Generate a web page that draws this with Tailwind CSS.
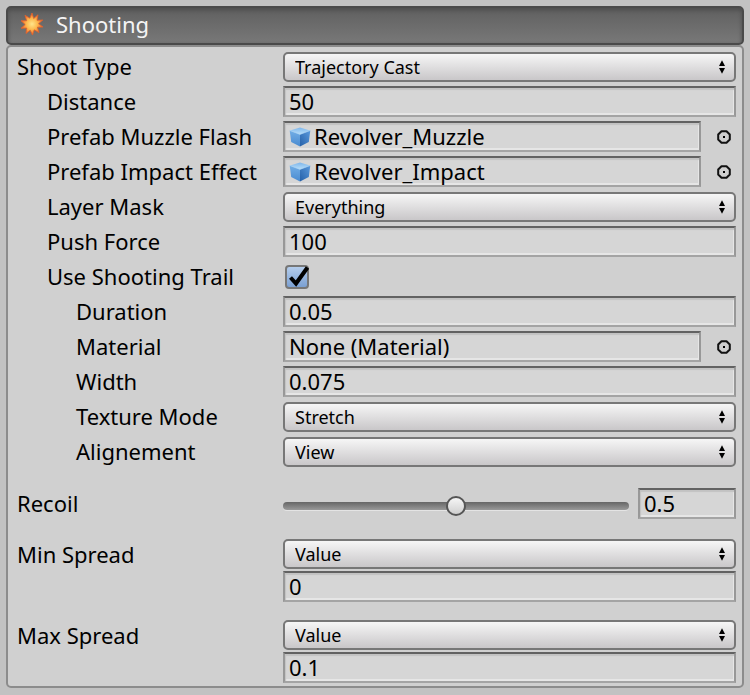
<!DOCTYPE html>
<html lang="en">
<head>
<meta charset="utf-8">
<meta name="viewport" content="width=device-width, initial-scale=1">
<title>Shooting</title>
<script src="https://cdn.jsdelivr.net/npm/@tailwindcss/browser@4"></script>
</head>
<body class="min-h-screen bg-[#c2c2c2] px-[6px] py-[6px] font-['Noto_Sans','Open_Sans',sans-serif] text-[22px] text-black">

<svg class="absolute size-0" aria-hidden="true">
  <defs>
    <linearGradient id="cubeTop" x1="0" y1="0" x2="0" y2="1"><stop offset="0" stop-color="#7fb6ea"/><stop offset="1" stop-color="#b9e0fb"/></linearGradient>
    <linearGradient id="cubeLeft" x1="0" y1="0" x2="0" y2="1"><stop offset="0" stop-color="#72aee6"/><stop offset="1" stop-color="#4a8bd0"/></linearGradient>
    <linearGradient id="cubeRight" x1="1" y1="0" x2="0" y2="1"><stop offset="0" stop-color="#5b9add"/><stop offset="1" stop-color="#2560a8"/></linearGradient>
    <radialGradient id="burst"><stop offset="0" stop-color="#ffe48a"/><stop offset=".5" stop-color="#fdb94e"/><stop offset="1" stop-color="#f0662a"/></radialGradient>
    <symbol id="cube" viewBox="0 0 22 20">
      <path d="M11 .5 21 3.5 11 7.5 1 3.5Z" fill="url(#cubeTop)"/>
      <path d="M.7 3.6 11 7.4V19.6L2.200 15.100Z" fill="url(#cubeLeft)"/>
      <path d="M21.300 3.600 11 7.400V19.600L19.800 15.100Z" fill="url(#cubeRight)"/>
      <path d="M1 3.600 11 7.400 21 3.600" fill="none" stroke="#a9d5f8" stroke-width=".6"/>
    </symbol>
    <symbol id="updown" viewBox="0 0 8 14"><path d="M4 .3 7 6H1ZM1 8H7L4 13.700Z"/></symbol>
    <symbol id="target" viewBox="0 0 16 16">
      <path d="M5.500 2.200H10.500L13.800 5.500V10.500L10.500 13.800H5.500L2.200 10.500V5.500Z" fill="none" stroke="#111" stroke-width="2" stroke-linejoin="round"/>
      <rect x="7" y="7" width="2" height="2" fill="#000"/>
    </symbol>
  </defs>
</svg>

<main>
  <header class="flex h-[39px] items-center gap-3 rounded-[5px] border-2 border-[#4a4a4a] bg-linear-to-b from-[#606060] to-[#787878] pb-[3px] pl-[12px] shadow-[inset_0_2px_4px_#4c4c4c]">
    <svg class="size-[24px]" viewBox="0 0 24 24" aria-hidden="true">
      <path d="M12 1 13.700 6.500 18 2.800 17 8.300 22.800 8 18.500 11.700 23 15 17.400 15.200 19 20.600 14.200 17.800 12.500 23 10.200 18.200 6 21.500 6.700 16 1 16.300 5.200 12.500 1 8.800 6.700 8.700 5 3.300 9.800 6.200Z" fill="url(#burst)" stroke="#e2622c" stroke-width=".8" stroke-linejoin="round"/>
    </svg>
    <h1 class="text-[22px] leading-[30px] text-[#f4f4f4]">Shooting</h1>
  </header>

  <form class="rounded-[5px] border-2 border-[#8c8c8c] bg-[#d0d0d0] pt-[2px] pr-[6px] pb-[3px] pl-[9px]">
    <div class="grid grid-cols-[266px_minmax(0,1fr)] auto-rows-[35px] items-center">
      <label for="type">Shoot Type</label>
      <div class="grid items-center">
        <select id="type" class="col-start-1 row-start-1 h-[30px] w-full appearance-none rounded-[5px] border-2 border-[#777] bg-linear-to-b from-[#f6f6f6] to-[#c9c7c9] pl-[10px] text-[18px] leading-[24px]"><option>Trajectory Cast</option></select>
        <svg class="pointer-events-none col-start-1 row-start-1 mr-[10px] h-[14px] w-[8px] justify-self-end"><use href="#updown"/></svg>
      </div>

      <label for="distance" class="pl-[30px]">Distance</label>
      <input id="distance" value="50" class="h-[31px] w-full border-2 border-t-[#626262] border-x-[#989898] border-b-[#a4a4a4] bg-[#d6d6d6] px-1 shadow-[inset_1px_2px_1px_#c2c2c2,inset_-1px_-2px_0_#e6e6e6]">

      <label for="muzzle" class="pl-[30px]">Prefab Muzzle Flash</label>
      <div class="flex items-center">
        <div class="flex h-[31px] flex-1 items-center gap-[3px] border-2 border-t-[#626262] border-x-[#989898] border-b-[#a4a4a4] bg-[#d6d6d6] px-1 shadow-[inset_1px_2px_1px_#c2c2c2,inset_-1px_-2px_0_#e6e6e6]">
          <svg class="h-[20px] w-[22px]" aria-hidden="true"><use href="#cube"/></svg>
          <input id="muzzle" readonly value="Revolver_Muzzle" class="min-w-0 flex-1 bg-transparent">
        </div>
        <button type="button" aria-label="Select muzzle prefab" class="mr-[4px] ml-[15px] size-[16px]"><svg class="size-full"><use href="#target"/></svg></button>
      </div>

      <label for="impact" class="pl-[30px]">Prefab Impact Effect</label>
      <div class="flex items-center">
        <div class="flex h-[31px] flex-1 items-center gap-[3px] border-2 border-t-[#626262] border-x-[#989898] border-b-[#a4a4a4] bg-[#d6d6d6] px-1 shadow-[inset_1px_2px_1px_#c2c2c2,inset_-1px_-2px_0_#e6e6e6]">
          <svg class="h-[20px] w-[22px]" aria-hidden="true"><use href="#cube"/></svg>
          <input id="impact" readonly value="Revolver_Impact" class="min-w-0 flex-1 bg-transparent">
        </div>
        <button type="button" aria-label="Select impact prefab" class="mr-[4px] ml-[15px] size-[16px]"><svg class="size-full"><use href="#target"/></svg></button>
      </div>

      <label for="mask" class="pl-[30px]">Layer Mask</label>
      <div class="grid items-center">
        <select id="mask" class="col-start-1 row-start-1 h-[30px] w-full appearance-none rounded-[5px] border-2 border-[#777] bg-linear-to-b from-[#f6f6f6] to-[#c9c7c9] pl-[10px] text-[18px] leading-[24px]"><option>Everything</option></select>
        <svg class="pointer-events-none col-start-1 row-start-1 mr-[10px] h-[14px] w-[8px] justify-self-end"><use href="#updown"/></svg>
      </div>

      <label for="force" class="pl-[30px]">Push Force</label>
      <input id="force" value="100" class="h-[31px] w-full border-2 border-t-[#626262] border-x-[#989898] border-b-[#a4a4a4] bg-[#d6d6d6] px-1 shadow-[inset_1px_2px_1px_#c2c2c2,inset_-1px_-2px_0_#e6e6e6]">

      <label for="trail" class="pl-[30px]">Use Shooting Trail</label>
      <div class="grid items-center pl-[2px]">
        <input id="trail" type="checkbox" checked class="peer col-start-1 row-start-1 size-[24px] appearance-none rounded-[4px] border-2 border-[#777] bg-linear-to-b from-[#b4cdec] to-[#7ba0d2]">
        <svg class="pointer-events-none invisible col-start-1 row-start-1 size-[24px] overflow-visible peer-checked:visible" viewBox="0 0 24 24" aria-hidden="true"><path d="M5.500 12.500 11 18.500 22.500 2.500" fill="none" stroke="#000" stroke-width="4"/></svg>
      </div>

      <label for="duration" class="pl-[59px]">Duration</label>
      <input id="duration" value="0.05" class="h-[31px] w-full border-2 border-t-[#626262] border-x-[#989898] border-b-[#a4a4a4] bg-[#d6d6d6] px-1 shadow-[inset_1px_2px_1px_#c2c2c2,inset_-1px_-2px_0_#e6e6e6]">

      <label for="material" class="pl-[59px]">Material</label>
      <div class="flex items-center">
        <input id="material" readonly value="None (Material)" class="h-[31px] min-w-0 flex-1 border-2 border-t-[#626262] border-x-[#989898] border-b-[#a4a4a4] bg-[#d6d6d6] px-1 shadow-[inset_1px_2px_1px_#c2c2c2,inset_-1px_-2px_0_#e6e6e6]">
        <button type="button" aria-label="Select material" class="mr-[4px] ml-[15px] size-[16px]"><svg class="size-full"><use href="#target"/></svg></button>
      </div>

      <label for="width" class="pl-[59px]">Width</label>
      <input id="width" value="0.075" class="h-[31px] w-full border-2 border-t-[#626262] border-x-[#989898] border-b-[#a4a4a4] bg-[#d6d6d6] px-1 shadow-[inset_1px_2px_1px_#c2c2c2,inset_-1px_-2px_0_#e6e6e6]">

      <label for="texture" class="pl-[59px]">Texture Mode</label>
      <div class="grid items-center">
        <select id="texture" class="col-start-1 row-start-1 h-[30px] w-full appearance-none rounded-[5px] border-2 border-[#777] bg-linear-to-b from-[#f6f6f6] to-[#c9c7c9] pl-[10px] text-[18px] leading-[24px]"><option>Stretch</option></select>
        <svg class="pointer-events-none col-start-1 row-start-1 mr-[10px] h-[14px] w-[8px] justify-self-end"><use href="#updown"/></svg>
      </div>

      <label for="align" class="pl-[59px]">Alignement</label>
      <div class="grid items-center">
        <select id="align" class="col-start-1 row-start-1 h-[30px] w-full appearance-none rounded-[5px] border-2 border-[#777] bg-linear-to-b from-[#f6f6f6] to-[#c9c7c9] pl-[10px] text-[18px] leading-[24px]"><option>View</option></select>
        <svg class="pointer-events-none col-start-1 row-start-1 mr-[10px] h-[14px] w-[8px] justify-self-end"><use href="#updown"/></svg>
      </div>
    </div>

    <div class="mt-[17px] grid h-[35px] grid-cols-[266px_minmax(0,1fr)] items-center">
      <label for="recoil">Recoil</label>
      <div class="flex items-center gap-[9px]">
        <input id="recoil" type="range" min="0" max="1" step="0.01" value="0.5" class="mt-[4px] h-[20px] min-w-0 flex-1 appearance-none bg-transparent [&::-webkit-slider-runnable-track]:h-[8px] [&::-webkit-slider-runnable-track]:rounded-full [&::-webkit-slider-runnable-track]:bg-linear-to-b [&::-webkit-slider-runnable-track]:from-[#666] [&::-webkit-slider-runnable-track]:to-[#999] [&::-webkit-slider-runnable-track]:shadow-[0_1px_0_#e4e4e4] [&::-webkit-slider-thumb]:-mt-[6px] [&::-webkit-slider-thumb]:size-[20px] [&::-webkit-slider-thumb]:appearance-none [&::-webkit-slider-thumb]:rounded-full [&::-webkit-slider-thumb]:border-2 [&::-webkit-slider-thumb]:border-[#555] [&::-webkit-slider-thumb]:bg-linear-to-b [&::-webkit-slider-thumb]:from-[#f6f6f6] [&::-webkit-slider-thumb]:to-[#cfcfcf]">
        <input aria-label="Recoil value" value="0.5" class="h-[31px] w-[98px] border-2 border-t-[#626262] border-x-[#989898] border-b-[#a4a4a4] bg-[#d6d6d6] px-1 shadow-[inset_1px_2px_1px_#c2c2c2,inset_-1px_-2px_0_#e6e6e6]">
      </div>
    </div>

    <div class="mt-4 grid grid-cols-[266px_minmax(0,1fr)] grid-rows-[34px_31px] items-center">
      <label for="min">Min Spread</label>
      <div class="grid items-center">
        <select id="min" class="col-start-1 row-start-1 h-[30px] w-full appearance-none rounded-[5px] border-2 border-[#777] bg-linear-to-b from-[#f6f6f6] to-[#c9c7c9] pl-[10px] text-[18px] leading-[24px]"><option>Value</option></select>
        <svg class="pointer-events-none col-start-1 row-start-1 mr-[10px] h-[14px] w-[8px] justify-self-end"><use href="#updown"/></svg>
      </div>
      <input aria-label="Min spread value" value="0" class="col-start-2 h-[31px] w-full border-2 border-t-[#626262] border-x-[#989898] border-b-[#a4a4a4] bg-[#d6d6d6] px-1 shadow-[inset_1px_2px_1px_#c2c2c2,inset_-1px_-2px_0_#e6e6e6]">
    </div>

    <div class="mt-4 grid grid-cols-[266px_minmax(0,1fr)] grid-rows-[34px_31px] items-center">
      <label for="max">Max Spread</label>
      <div class="grid items-center">
        <select id="max" class="col-start-1 row-start-1 h-[30px] w-full appearance-none rounded-[5px] border-2 border-[#777] bg-linear-to-b from-[#f6f6f6] to-[#c9c7c9] pl-[10px] text-[18px] leading-[24px]"><option>Value</option></select>
        <svg class="pointer-events-none col-start-1 row-start-1 mr-[10px] h-[14px] w-[8px] justify-self-end"><use href="#updown"/></svg>
      </div>
      <input aria-label="Max spread value" value="0.1" class="col-start-2 h-[31px] w-full border-2 border-t-[#626262] border-x-[#989898] border-b-[#a4a4a4] bg-[#d6d6d6] px-1 shadow-[inset_1px_2px_1px_#c2c2c2,inset_-1px_-2px_0_#e6e6e6]">
    </div>
  </form>
</main>
</body>
</html>
